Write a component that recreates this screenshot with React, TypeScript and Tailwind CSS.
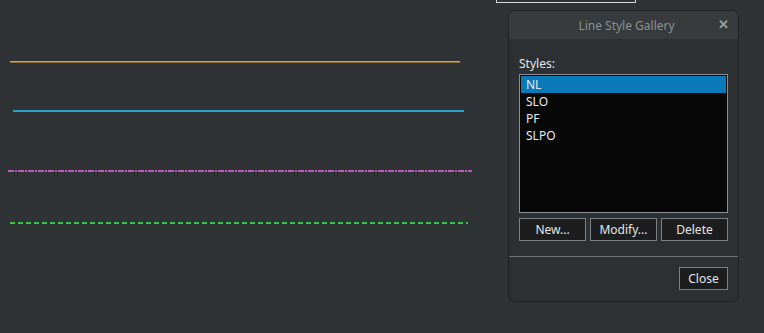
import React from "react";

const styles = ["NL", "SLO", "PF", "SLPO"];

const DlgButton = ({ label, className = "" }: { label: string; className?: string }) => (
  <button
    className={`h-[23px] border border-[#7b7f82] bg-[#1b1d1e] text-[12px] text-[#e6e6e6] ${className}`}
  >
    {label}
  </button>
);

export default function App() {
  return (
    <div
      className="relative h-[333px] w-[764px] overflow-hidden bg-[#2f3335]"
      style={{ fontFamily: '"Noto Sans", "Open Sans", sans-serif' }}
    >
      {/* drawing canvas */}
      <svg className="absolute inset-0" width="764" height="333" shapeRendering="crispEdges">
        <rect x="10" y="61" width="450" height="1" fill="#e0a438" />
        <rect x="10" y="62" width="450" height="1" fill="#8a6d35" />
        <rect x="13" y="110" width="451" height="2" fill="#2aa3cc" />
        <line x1="8" y1="171" x2="472" y2="171" stroke="#b85cb8" strokeWidth="2" strokeDasharray="6 1 2 1" />
        <line x1="10" y1="223" x2="468" y2="223" stroke="#3cc444" strokeWidth="2" strokeDasharray="5 3" />
      </svg>

      {/* partially visible toolbar box */}
      <div className="absolute left-[496px] top-[-20px] h-[23px] w-[140px] border border-[#d8d8d8] bg-[#2f3335]" />

      {/* dialog */}
      <div className="absolute left-[508px] top-[10px] flex h-[292px] w-[231px] flex-col overflow-hidden rounded-[6px] border border-[#1f2224] bg-[#2c3032]">
        <div className="relative flex h-[28px] items-center justify-center bg-[#373b3d]">
          <span className="pl-[6px] pt-[2px] text-[12px] text-[#8c9194]">Line Style Gallery</span>
          <span className="absolute right-[9px] top-[4px] text-[13px] font-bold text-[#9a9ea1]">✕</span>
        </div>
        <div className="flex flex-col px-[10px]">
          <div className="mt-[16px] text-[12px] leading-[18px] text-[#e6e6e6]">Styles:</div>
          <div className="mt-[1px] h-[139px] border border-[#8a8e90] bg-[#080808] p-[1px]">
            {styles.map((s, i) => (
              <div
                key={s}
                className={`h-[17px] pl-[5px] text-[12px] leading-[17px] text-[#eaeaea] ${i === 0 ? "bg-[#0a79b8]" : ""}`}
              >
                {s}
              </div>
            ))}
          </div>
          <div className="mt-[5px] flex gap-[4px]">
            <DlgButton label="New..." className="w-[67px]" />
            <DlgButton label="Modify..." className="w-[67px]" />
            <DlgButton label="Delete" className="w-[67px]" />
          </div>
        </div>
        <div className="mt-[15px] h-px bg-[#6e7274]" />
        <div className="flex justify-end px-[10px] pt-[10px]">
          <DlgButton label="Close" className="w-[49px]" />
        </div>
      </div>
    </div>
  );
}
